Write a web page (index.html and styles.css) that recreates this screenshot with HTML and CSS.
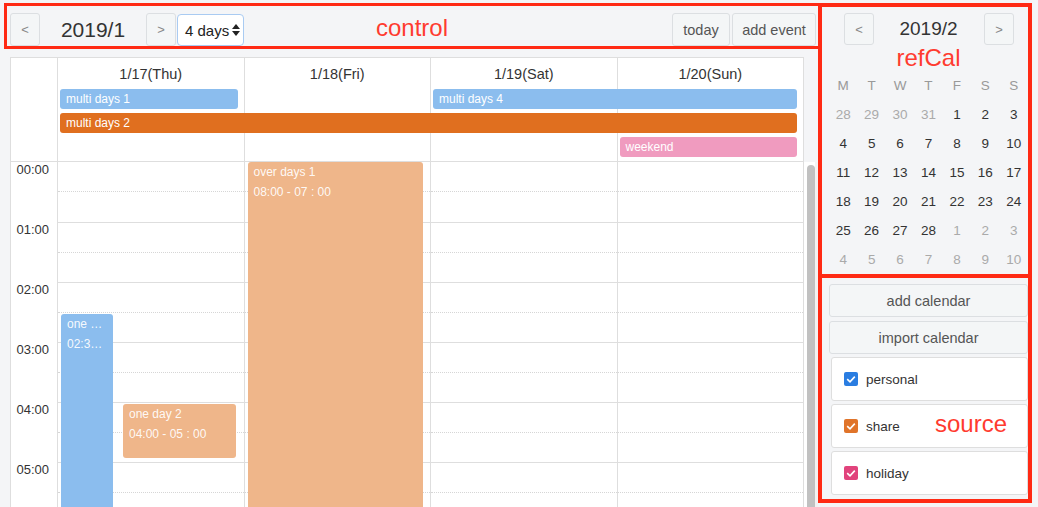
FILE: index.html
```html
<!DOCTYPE html>
<html lang="en">
<head>
  <meta charset="UTF-8" />
  <title>Calendar</title>
  <link rel="stylesheet" href="styles.css">
</head>
<body>
<div class="app">

  <div class="main">
    <div class="control">
      <button class="btn nav">&lt;</button>
      <div class="title">2019/1</div>
      <button class="btn nav">&gt;</button>
      <div class="select">
        <span>4 days</span>
        <svg width="8" height="14" viewBox="0 0 8 14"><polygon points="0,6 4,1 8,6" fill="#222"/><polygon points="0,8 8,8 4,13" fill="#222"/></svg>
      </div>
      <div class="spacer"></div>
      <button class="btn today">today</button>
      <button class="btn add">add event</button>
      <span class="note note-control">control</span>
    </div>

    <div class="calendar">
      <div class="cal-head">
        <div class="hcol" style="grid-column: 1"></div>
        <div class="hcol" style="grid-column: 2">1/17(Thu)</div>
        <div class="hcol" style="grid-column: 3">1/18(Fri)</div>
        <div class="hcol" style="grid-column: 4">1/19(Sat)</div>
        <div class="hcol" style="grid-column: 5">1/20(Sun)</div>

        <div class="allday blue" style="grid-column: 2 / 3; grid-row: 2">multi days 1</div>
        <div class="allday blue" style="grid-column: 4 / 6; grid-row: 2">multi days 4</div>
        <div class="allday orange" style="grid-column: 2 / 6; grid-row: 3">multi days 2</div>
        <div class="allday pink" style="grid-column: 5 / 6; grid-row: 4">weekend</div>
      </div>

      <div class="cal-body">
        <div class="times">
          <div class="tlabel">00:00</div>
          <div class="tlabel">01:00</div>
          <div class="tlabel">02:00</div>
          <div class="tlabel">03:00</div>
          <div class="tlabel">04:00</div>
          <div class="tlabel">05:00</div>
        </div>
        <div class="days">
          <div class="day">
            <div class="hour"><div class="half"></div><div class="half"></div></div>
            <div class="hour"><div class="half"></div><div class="half"></div></div>
            <div class="hour"><div class="half"></div><div class="half"></div></div>
            <div class="hour"><div class="half"></div><div class="half"></div></div>
            <div class="hour"><div class="half"></div><div class="half"></div></div>
            <div class="hour"><div class="half"></div><div class="half"></div></div>
            <div class="hour"><div class="half"></div><div class="half"></div></div>
            <div class="ev ev-blue" style="top: 152px; left: 3px; width: 52px; height: 270px;">
              <div>one …</div><div>02:3…</div>
            </div>
            <div class="ev ev-orange" style="top: 242px; left: 65px; width: 113px; height: 54px;">
              <div>one day 2</div><div>04:00 - 05 : 00</div>
            </div>
          </div>
          <div class="day">
            <div class="hour"><div class="half"></div><div class="half"></div></div>
            <div class="hour"><div class="half"></div><div class="half"></div></div>
            <div class="hour"><div class="half"></div><div class="half"></div></div>
            <div class="hour"><div class="half"></div><div class="half"></div></div>
            <div class="hour"><div class="half"></div><div class="half"></div></div>
            <div class="hour"><div class="half"></div><div class="half"></div></div>
            <div class="hour"><div class="half"></div><div class="half"></div></div>
            <div class="ev ev-orange" style="top: 0; left: 3px; width: 175px; height: 420px;">
              <div>over days 1</div><div>08:00 - 07 : 00</div>
            </div>
          </div>
          <div class="day">
            <div class="hour"><div class="half"></div><div class="half"></div></div>
            <div class="hour"><div class="half"></div><div class="half"></div></div>
            <div class="hour"><div class="half"></div><div class="half"></div></div>
            <div class="hour"><div class="half"></div><div class="half"></div></div>
            <div class="hour"><div class="half"></div><div class="half"></div></div>
            <div class="hour"><div class="half"></div><div class="half"></div></div>
            <div class="hour"><div class="half"></div><div class="half"></div></div>
          </div>
          <div class="day">
            <div class="hour"><div class="half"></div><div class="half"></div></div>
            <div class="hour"><div class="half"></div><div class="half"></div></div>
            <div class="hour"><div class="half"></div><div class="half"></div></div>
            <div class="hour"><div class="half"></div><div class="half"></div></div>
            <div class="hour"><div class="half"></div><div class="half"></div></div>
            <div class="hour"><div class="half"></div><div class="half"></div></div>
            <div class="hour"><div class="half"></div><div class="half"></div></div>
          </div>
        </div>
        <div class="scroll"><div class="thumb"></div></div>
      </div>
    </div>
  </div>

  <div class="side">
    <div class="refcal">
      <div class="ref-nav">
        <button class="btn nav">&lt;</button>
        <div class="ref-title">2019/2</div>
        <button class="btn nav">&gt;</button>
      </div>
      <div class="note ref-label">refCal</div>
      <div class="month">
        <span class="wd">M</span><span class="wd">T</span><span class="wd">W</span><span class="wd">T</span><span class="wd">F</span><span class="wd">S</span><span class="wd">S</span>
        <span class="off">28</span><span class="off">29</span><span class="off">30</span><span class="off">31</span><span>1</span><span>2</span><span>3</span>
        <span>4</span><span>5</span><span>6</span><span>7</span><span>8</span><span>9</span><span>10</span>
        <span>11</span><span>12</span><span>13</span><span>14</span><span>15</span><span>16</span><span>17</span>
        <span>18</span><span>19</span><span>20</span><span>21</span><span>22</span><span>23</span><span>24</span>
        <span>25</span><span>26</span><span>27</span><span>28</span><span class="off">1</span><span class="off">2</span><span class="off">3</span>
        <span class="off">4</span><span class="off">5</span><span class="off">6</span><span class="off">7</span><span class="off">8</span><span class="off">9</span><span class="off">10</span>
      </div>
    </div>

    <div class="source">
      <button class="btn src-btn">add calendar</button>
      <button class="btn src-btn">import calendar</button>
      <div class="src-item">
        <span class="check c-blue"><svg width="14" height="14" viewBox="0 0 14 14"><polyline points="3.2,7.2 6,9.8 10.8,4.6" fill="none" stroke="#fff" stroke-width="1.6"/></svg></span>
        personal
      </div>
      <div class="src-item">
        <span class="check c-orange"><svg width="14" height="14" viewBox="0 0 14 14"><polyline points="3.2,7.2 6,9.8 10.8,4.6" fill="none" stroke="#fff" stroke-width="1.6"/></svg></span>
        share
      </div>
      <div class="src-item">
        <span class="check c-pink"><svg width="14" height="14" viewBox="0 0 14 14"><polyline points="3.2,7.2 6,9.8 10.8,4.6" fill="none" stroke="#fff" stroke-width="1.6"/></svg></span>
        holiday
      </div>
      <span class="note note-source">source</span>
    </div>
  </div>

</div>
</body>
</html>
```

FILE: styles.css
```css
* { box-sizing: border-box; margin: 0; padding: 0; }

html, body {
  height: 100%;
  overflow: hidden;
  background: #f4f5f7;
  font-family: 'Liberation Sans', Arial, sans-serif;
  color: #333;
}

.app {
  display: flex;
  height: 100%;
}

/* annotation labels */
.note {
  color: #ff3b2f;
  font-size: 24px;
  line-height: 28px;
}

.btn {
  height: 33px;
  background: #f4f6f7;
  border: 1px solid #dcdfe2;
  border-radius: 3px;
  color: #555;
  font-family: 'Liberation Sans', Arial, sans-serif;
  font-size: 14.5px;
}

.btn.nav {
  width: 30px;
  font-size: 13px;
  color: #888;
}

/* ---- left side ---- */

.main {
  width: 818px;
  display: flex;
  flex-direction: column;
  min-height: 0;
}

.control {
  position: relative;
  display: flex;
  align-items: flex-start;
  height: 46px;
  margin: 3px 0 0 4px;
  padding: 7px 2px 0 3px;
  border: 3px solid #ff2a14;
  border-right: none;
}

.title {
  width: 106px;
  text-align: center;
  font-size: 21px;
  line-height: 33px;
  color: #333;
}

.select {
  display: flex;
  align-items: center;
  justify-content: space-between;
  width: 67px;
  height: 32px;
  margin: 1px 0 0 1px;
  padding: 0 3px 0 7px;
  background: #fff;
  border: 1px solid #a9cbf2;
  border-radius: 4px;
  font-size: 15px;
  color: #222;
}

.spacer { flex-grow: 1; }

.today { width: 58px; margin-right: 2px; }
.add { width: 84px; }

.note-control {
  position: absolute;
  left: 369px;
  top: 8px;
}

.calendar {
  flex-grow: 1;
  min-height: 0;
  display: flex;
  flex-direction: column;
  margin: 8px 0 0 10px;
}

.cal-head {
  width: 794px;
  display: grid;
  grid-template-columns: 47px repeat(4, 1fr);
  grid-template-rows: 27px 20px 20px 20px 0;
  row-gap: 4px;
  background: #fff;
  border: 1px solid #dedede;
  border-right: none;
}

.hcol {
  grid-row: 1 / -1;
  border-right: 1px solid #dedede;
  padding-top: 8px;
  text-align: center;
  font-size: 14.5px;
  line-height: 16px;
  color: #333;
}

.allday {
  margin: 0 7px 0 2px;
  padding-left: 6px;
  border-radius: 3px;
  color: #fff;
  font-size: 12px;
  line-height: 20px;
  white-space: nowrap;
  overflow: hidden;
}

.blue { background: #8bbdee; }
.orange { background: #e06f1f; }
.pink { background: #f09bbf; }

.cal-body {
  flex-grow: 1;
  min-height: 0;
  display: flex;
  overflow: hidden;
  background: #fff;
  border-left: 1px solid #dedede;
}

.times {
  width: 47px;
  flex-shrink: 0;
  border-right: 1px solid #dedede;
}

.tlabel {
  height: 60px;
  padding-right: 8px;
  text-align: right;
  font-size: 13px;
  line-height: 16px;
  color: #333;
}

.days {
  width: 746px;
  flex-shrink: 0;
  display: grid;
  grid-template-columns: repeat(4, 1fr);
  align-items: start;
}

.day {
  position: relative;
  border-right: 1px solid #dedede;
}

.hour { height: 60px; }
.hour + .hour { border-top: 1px solid #dedede; }

.half { height: 30px; }
.half:first-child { border-bottom: 1px dotted #d6d6d6; }

.ev {
  position: absolute;
  padding: 0 6px;
  border-radius: 3px;
  color: rgba(255, 255, 255, 0.93);
  font-size: 12px;
  line-height: 20px;
  white-space: nowrap;
  overflow: hidden;
}

.ev-blue { background: #8bbdee; }
.ev-orange { background: #efb68a; }

.scroll {
  width: 14px;
  flex-shrink: 0;
  background: #fff;
  border-right: 3px solid #f3f3f3;
}

.thumb {
  width: 8px;
  height: 600px;
  margin: 3px 0 0 3px;
  border-radius: 4px;
  background: #c1c1c1;
}

/* ---- right side ---- */

.side {
  width: 220px;
  padding: 3px 6px 0 0;
}

.refcal {
  border: 4px solid #ff2a14;
  padding: 6px 0 0 7px;
}

.ref-nav {
  display: flex;
  align-items: center;
  height: 32px;
}

.ref-nav .btn {
  height: 32px;
  margin: 0 14px 0 15px;
}

.ref-nav .btn:last-child { margin: 0 14px 0 0; }

.ref-title {
  flex-grow: 1;
  text-align: center;
  font-size: 19px;
  color: #333;
  margin-left: -15px;
}

.ref-label {
  height: 26px;
  line-height: 26px;
  text-align: center;
}

.month {
  display: grid;
  grid-template-columns: repeat(7, 1fr);
  grid-auto-rows: 29px;
  text-align: center;
  font-size: 13.5px;
  line-height: 29px;
  color: #333;
}

.month .wd { color: #999; }
.month .off { color: #aaa; }

.source {
  position: relative;
  height: 225px;
  padding: 6px 0 0 7px;
  border: 4px solid #ff2a14;
  border-top: none;
}

.src-btn {
  display: block;
  width: 199px;
  margin-bottom: 4px;
  color: #555;
}

.src-btn + .src-btn { margin-bottom: 3px; }

.src-item {
  display: flex;
  align-items: center;
  width: 197px;
  height: 44px;
  margin: 0 0 3px 2px;
  padding-left: 12px;
  background: #fff;
  border: 1px solid #dedede;
  border-radius: 3px;
  font-size: 13.5px;
  color: #333;
}

.check {
  display: flex;
  width: 14px;
  height: 14px;
  margin-right: 8px;
  border-radius: 2px;
}

.c-blue { background: #2a7de1; }
.c-orange { background: #e0742a; }
.c-pink { background: #e1437c; }

.note-source {
  position: absolute;
  left: 113px;
  top: 132px;
}
```
